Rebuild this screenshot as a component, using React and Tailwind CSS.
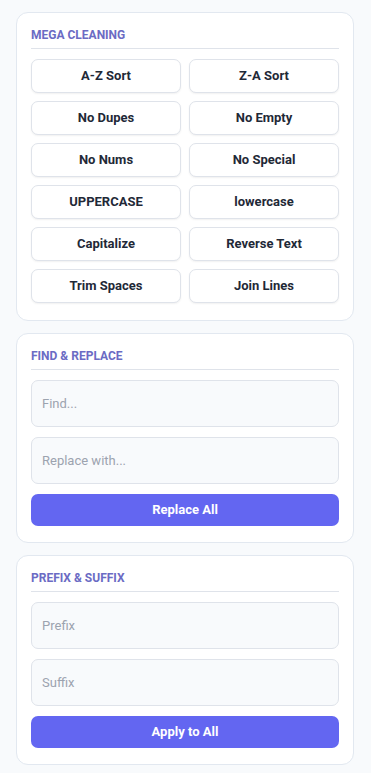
import React from "react";

const cleanButtons = [
  "A-Z Sort",
  "Z-A Sort",
  "No Dupes",
  "No Empty",
  "No Nums",
  "No Special",
  "UPPERCASE",
  "lowercase",
  "Capitalize",
  "Reverse Text",
  "Trim Spaces",
  "Join Lines",
];

const Section = ({ title, children }) => (
  <div className="bg-white border border-[#e2e8f0] rounded-[12px] px-[14px] pt-[14px] pb-[16px]">
    <div className="text-[12px] font-bold text-[#6b6bc4] uppercase leading-[16px] pb-[5px] border-b border-[#dfe3ea] mb-[10px]">
      {title}
    </div>
    {children}
  </div>
);

const Field = ({ placeholder }) => (
  <input
    placeholder={placeholder}
    className="w-full h-[47px] px-[10px] bg-[#f8fafc] border border-[#dfe3ea] rounded-[7px] text-[13px] text-gray-700 placeholder:text-[#9ca3af] outline-none"
  />
);

export default function App() {
  return (
    <div
      className="min-h-screen bg-[#f8fafc] pl-[16px] pr-[17px] pt-[12px] pb-[8px] flex flex-col gap-[12px]"
      style={{ fontFamily: "Roboto, 'Liberation Sans', sans-serif" }}
    >
      <Section title="Mega Cleaning">
        <div className="grid grid-cols-2 gap-[8px] pb-[1px]">
          {cleanButtons.map((label) => (
            <button
              key={label}
              className="h-[34px] bg-white border border-[#dfe3ea] rounded-[7px] shadow-[0_1px_2px_rgba(0,0,0,0.06)] text-[13px] font-bold text-[#1f2937]"
            >
              {label}
            </button>
          ))}
        </div>
      </Section>

      <Section title="Find & Replace">
        <div className="flex flex-col gap-[10px]">
          <Field placeholder="Find..." />
          <Field placeholder="Replace with..." />
          <button className="h-[32px] bg-[#6366f1] rounded-[7px] text-white text-[13px] font-bold">
            Replace All
          </button>
        </div>
      </Section>

      <Section title="Prefix & Suffix">
        <div className="flex flex-col gap-[10px]">
          <Field placeholder="Prefix" />
          <Field placeholder="Suffix" />
          <button className="h-[32px] bg-[#6366f1] rounded-[7px] text-white text-[13px] font-bold">
            Apply to All
          </button>
        </div>
      </Section>
    </div>
  );
}
